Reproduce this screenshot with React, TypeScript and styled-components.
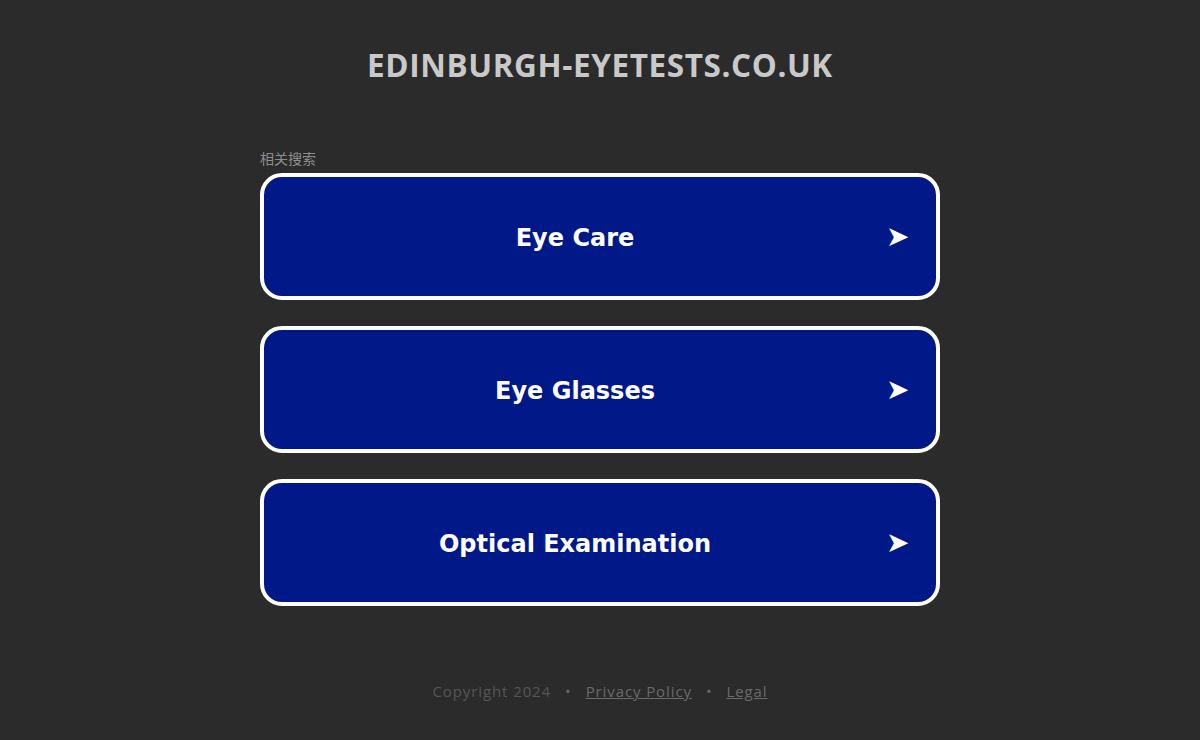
import React from 'react';
import styled, { createGlobalStyle } from 'styled-components';

const GlobalStyle = createGlobalStyle`
  html, body {
    margin: 0;
    padding: 0;
    background: #2b2b2b;
  }
`;

const Page = styled.div`
  width: 1200px;
  height: 740px;
  display: flex;
  flex-direction: column;
  align-items: center;
  background: #2b2b2b;
`;

const Title = styled.h1`
  margin: 44px 0 0;
  font-family: 'Open Sans', 'DejaVu Sans', sans-serif;
  font-weight: 700;
  font-size: 31.5px;
  line-height: 42px;
  letter-spacing: 0.6px;
  color: #c9c9c9;
`;

const Results = styled.div`
  width: 680px;
  margin-top: 64px;
  display: flex;
  flex-direction: column;
`;

const Label = styled.div`
  font-family: 'Noto Sans CJK SC', sans-serif;
  font-size: 14px;
  line-height: 17px;
  color: #8e8e8e;
  margin-bottom: 6px;
`;

const List = styled.div`
  display: flex;
  flex-direction: column;
  gap: 26px;
`;

const LinkBox = styled.a`
  display: flex;
  align-items: center;
  height: 127px;
  box-sizing: border-box;
  border: 4px solid #ffffff;
  border-radius: 22px;
  background: #011888;
  text-decoration: none;
  cursor: pointer;
`;

const LinkText = styled.span`
  flex: 1;
  text-align: center;
  font-family: 'DejaVu Sans', Verdana, sans-serif;
  font-weight: 700;
  font-size: 24px;
  color: #ffffff;
  padding-top: 2px;
`;

const Arrow = styled.span`
  width: 50px;
  font-family: 'DejaVu Sans', sans-serif;
  font-size: 28px;
  line-height: 28px;
  color: #ffffff;
`;

const Footer = styled.div`
  margin-top: 75px;
  display: flex;
  align-items: center;
  gap: 14px;
  font-family: 'Open Sans', sans-serif;
  font-size: 15px;
  letter-spacing: 0.9px;
  color: #565656;
`;

const FooterLink = styled.a`
  color: #6a6a6a;
  text-decoration: underline;
`;

const Dot = styled.span`
  font-size: 15px;
  color: #666666;
`;

const items = ['Eye Care', 'Eye Glasses', 'Optical Examination'];

const App = () => {
  return (
    <Page>
      <GlobalStyle />
      <Title>EDINBURGH-EYETESTS.CO.UK</Title>
      <Results>
        <Label>相关搜索</Label>
        <List>
          {items.map((item) => (
            <LinkBox key={item}>
              <LinkText>{item}</LinkText>
              <Arrow>➤</Arrow>
            </LinkBox>
          ))}
        </List>
      </Results>
      <Footer>
        <span>Copyright 2024</span>
        <Dot>•</Dot>
        <FooterLink>Privacy Policy</FooterLink>
        <Dot>•</Dot>
        <FooterLink>Legal</FooterLink>
      </Footer>
    </Page>
  );
};

export default App;
